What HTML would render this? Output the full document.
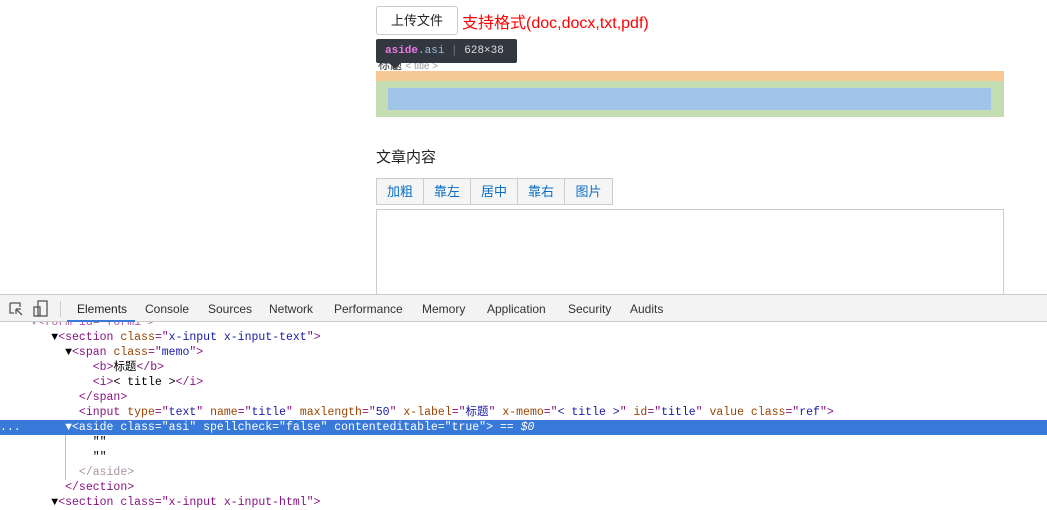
<!DOCTYPE html>
<html><head><meta charset="utf-8"><style>
*{margin:0;padding:0;box-sizing:border-box}
body{width:1047px;height:501px;overflow:hidden;background:#fff;font-family:"Liberation Sans","Noto Sans CJK SC",sans-serif;position:relative}
.a{position:absolute}
.btn{left:376px;top:6px;width:82px;height:29px;border:1px solid #ccc;border-radius:3px;font-size:13px;text-align:center;line-height:27px;color:#222;background:#fff}
.tb{top:178px;left:376px;height:27px;display:flex;border:1px solid #ccc;background:#f5f5f5}
.tb span{width:47px;text-align:center;font-size:13px;line-height:25px;color:#0a6fc2;border-right:1px solid #ccc}
.tb span:last-child{border-right:none}
.dt{top:294px;left:0;width:1047px;height:28px;background:#f3f3f3;border-top:1px solid #ccc;border-bottom:1px solid #ccc;font-size:12px;color:#333;z-index:5}
.dt span{position:absolute;top:7px}
.code{font-family:"Liberation Mono","Noto Sans CJK SC",monospace;font-size:11.5px;white-space:pre;line-height:15px}
.t{color:#881280}.n{color:#994500}.v{color:#1a1aa6}.g{color:#a894a6}
</style></head><body>
<div class="a btn">上传文件</div>
<div class="a" style="left:462px;top:9px;color:#f00;font-size:16px">支持格式(doc,docx,txt,pdf)</div>
<div class="a" style="left:378px;top:56px;font-size:12px;color:#333">标题 <span style="color:#999;font-size:10px">&lt; title &gt;</span></div>
<div class="a" style="left:376px;top:71px;width:628px;height:10px;background:#f6c894"></div>
<div class="a" style="left:376px;top:81px;width:628px;height:36px;background:#c4ddb3"></div>
<div class="a" style="left:388px;top:88px;width:603px;height:22px;background:#a0c4e8"></div>
<div class="a" style="left:376px;top:39px;width:141px;height:24px;background:#333740;border-radius:2px;font-family:'Liberation Mono',monospace;font-size:11px;line-height:24px;padding-left:9px;color:#fff;white-space:nowrap;z-index:3"><b style="color:#ee78e6">aside</b><span style="color:#9bbbdc">.asi</span> <span style="color:#777">|</span> <span style="color:#ddd">628×38</span></div>
<div class="a" style="left:389px;top:63px;width:0;height:0;border-left:6px solid transparent;border-right:6px solid transparent;border-top:6px solid #333740;z-index:3"></div>
<div class="a" style="left:376px;top:146px;font-size:15px;color:#222">文章内容</div>
<div class="a tb"><span>加粗</span><span>靠左</span><span>居中</span><span>靠右</span><span>图片</span></div>
<div class="a" style="left:376px;top:209px;width:628px;height:90px;border:1px solid #ccc"></div>
<div class="a dt">
<svg class="a" style="left:8px;top:6px" width="16" height="16" fill="none" stroke="#555" stroke-width="1.3"><path d="M2 2h10v4M2 2v10h4"/><path d="M8 8l6 6M8 8v5M8 8h5"/></svg>
<svg class="a" style="left:33px;top:5px" width="16" height="18" fill="none" stroke="#555" stroke-width="1.3"><rect x="5" y="1" width="9" height="15"/><rect x="1" y="7" width="6" height="9"/></svg>
<div class="a" style="left:60px;top:6px;width:1px;height:16px;background:#ccc"></div>
<span style="left:77px;color:#222">Elements</span>
<div class="a" style="left:67px;top:25px;width:68px;height:2px;background:#3879d9"></div>
<span style="left:145px">Console</span><span style="left:208px">Sources</span><span style="left:269px">Network</span><span style="left:334px">Performance</span><span style="left:422px">Memory</span><span style="left:487px">Application</span><span style="left:568px">Security</span><span style="left:630px">Audits</span>
</div>
<div class="a" style="left:0;top:420px;width:1047px;height:15px;background:#3879d9"></div>
<div class="a" style="left:65px;top:435px;width:1px;height:45px;background:#a8c4ea"></div>
<div class="a code" style="left:3px;top:315px"><span class="g">    ▼</span><span class="t" style="opacity:.7">&lt;form id="form1"&gt;</span>
       ▼<span class="t">&lt;section</span> <span class="n">class</span><span class="t">="</span><span class="v">x-input x-input-text</span><span class="t">"&gt;</span>
         ▼<span class="t">&lt;span</span> <span class="n">class</span><span class="t">="</span><span class="v">memo</span><span class="t">"&gt;</span>
             <span class="t">&lt;b&gt;</span>标题<span class="t">&lt;/b&gt;</span>
             <span class="t">&lt;i&gt;</span>&lt; title &gt;<span class="t">&lt;/i&gt;</span>
           <span class="t">&lt;/span&gt;</span>
           <span class="t">&lt;input</span> <span class="n">type</span><span class="t">="</span><span class="v">text</span><span class="t">"</span> <span class="n">name</span><span class="t">="</span><span class="v">title</span><span class="t">"</span> <span class="n">maxlength</span><span class="t">="</span><span class="v">50</span><span class="t">"</span> <span class="n">x-label</span><span class="t">="</span><span class="v">标题</span><span class="t">"</span> <span class="n">x-memo</span><span class="t">="</span><span class="v">&lt; title &gt;</span><span class="t">"</span> <span class="n">id</span><span class="t">="</span><span class="v">title</span><span class="t">"</span> <span class="n">value</span> <span class="n">class</span><span class="t">="</span><span class="v">ref</span><span class="t">"&gt;</span>
<span style="color:#fff">         ▼&lt;aside class="asi" spellcheck="false" contenteditable="true"&gt; == <i>$0</i></span>
             ""
             ""
           <span class="g">&lt;/aside&gt;</span>
         <span class="t">&lt;/section&gt;</span>
       ▼<span class="t">&lt;section class="x-input x-input-html"&gt;</span></div>
<div class="a code" style="left:0;top:420px;color:#fff">...</div>
</body></html>
